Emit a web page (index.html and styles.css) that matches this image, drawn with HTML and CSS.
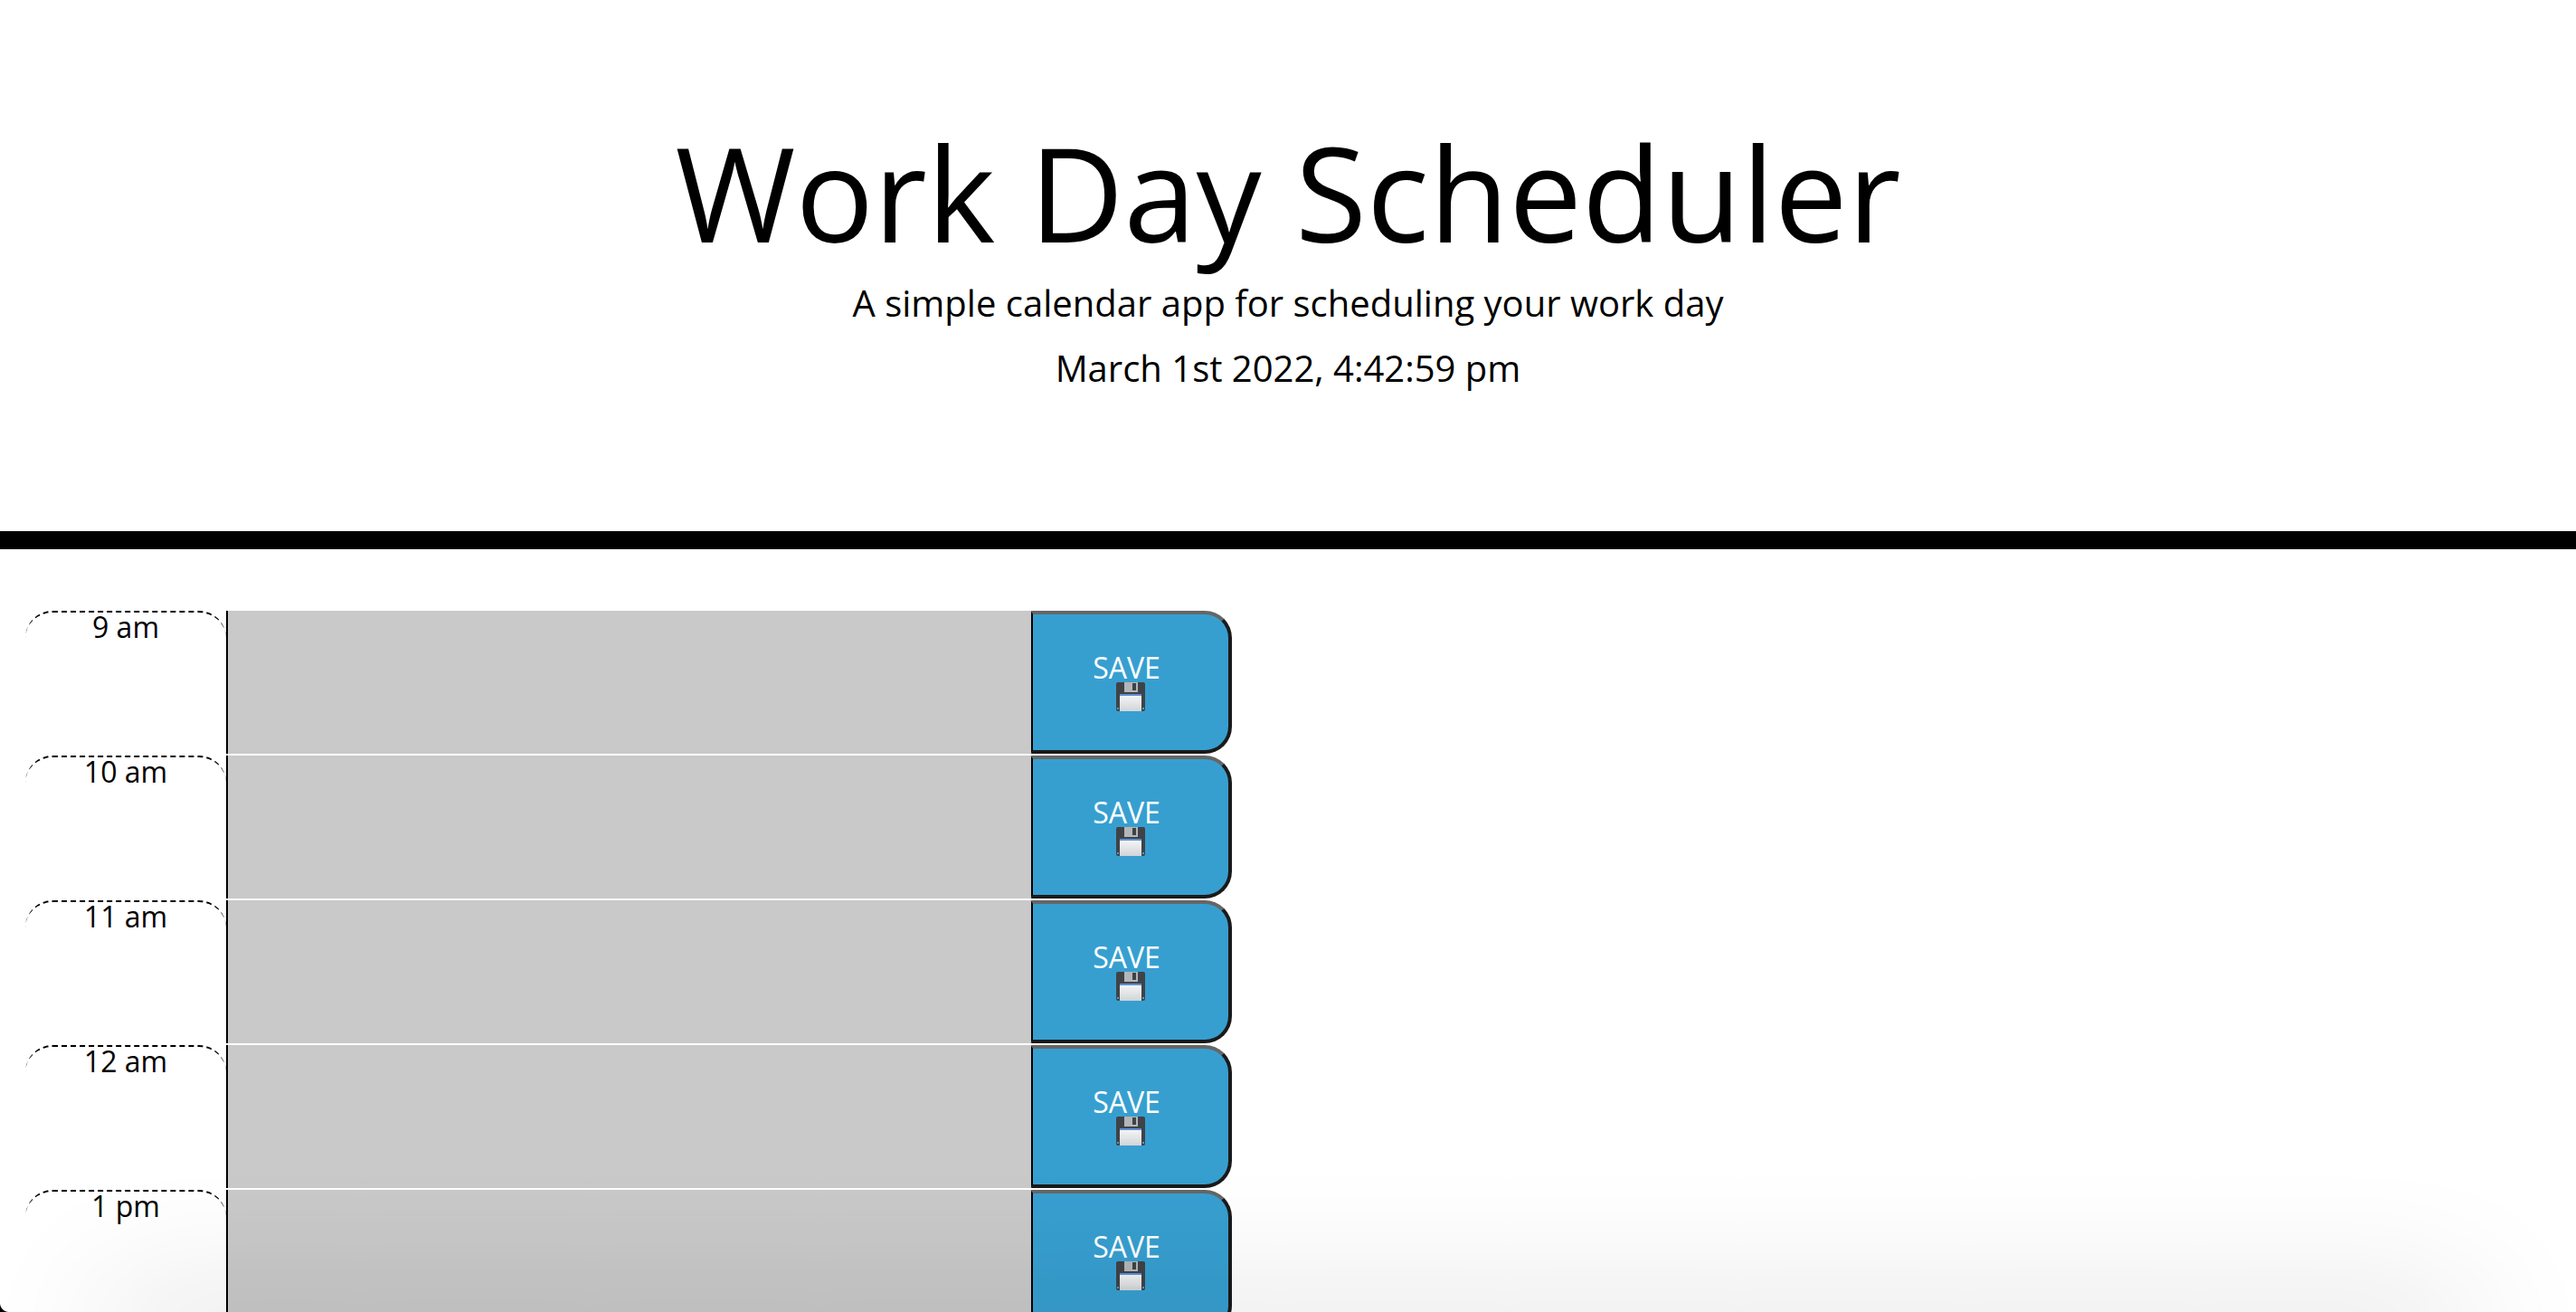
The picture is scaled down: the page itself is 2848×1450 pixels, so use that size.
FILE: index.html
```html
<!DOCTYPE html>
<html lang="en">

<head>
    <meta charset="UTF-8">
    <title>Work Day Scheduler</title>
    <link rel="stylesheet" href="styles.css">
</head>

<body>
    <svg class="defs" width="0" height="0">
        <defs>
            <linearGradient id="label" x1="0" y1="0" x2="0" y2="1">
                <stop offset="0" stop-color="#f7f8f9" />
                <stop offset="1" stop-color="#d2d4d6" />
            </linearGradient>
            <symbol id="disk" viewBox="0 0 32 32">
                <rect x="0" y="0" width="32" height="32" rx="2" fill="#3f4347" />
                <rect x="9" y="0" width="15" height="11" fill="#b4b6b8" />
                <rect x="18" y="1" width="4" height="8" fill="#3f4347" />
                <rect x="4" y="13" width="24" height="19" fill="url(#label)" />
                <rect x="4" y="13" width="24" height="2" fill="#5e8fd6" />
                <rect x="1" y="28" width="2" height="2" fill="#4a9cc0" />
                <rect x="29" y="28" width="2" height="2" fill="#4a9cc0" />
            </symbol>
        </defs>
    </svg>

    <header class="jumbotron">
        <h1>Work Day Scheduler</h1>
        <p class="lead">A simple calendar app for scheduling your work day</p>
        <p class="lead">March 1st 2022, 4:42:59 pm</p>
    </header>

    <div class="container">
        <div class="row">
            <div class="hour">9 am</div>
            <div class="description"></div>
            <button class="saveBtn">SAVE<svg class="disk"><use href="#disk" /></svg></button>
        </div>
        <div class="row">
            <div class="hour">10 am</div>
            <div class="description"></div>
            <button class="saveBtn">SAVE<svg class="disk"><use href="#disk" /></svg></button>
        </div>
        <div class="row">
            <div class="hour">11 am</div>
            <div class="description"></div>
            <button class="saveBtn">SAVE<svg class="disk"><use href="#disk" /></svg></button>
        </div>
        <div class="row">
            <div class="hour">12 am</div>
            <div class="description"></div>
            <button class="saveBtn">SAVE<svg class="disk"><use href="#disk" /></svg></button>
        </div>
        <div class="row">
            <div class="hour">1 pm</div>
            <div class="description"></div>
            <button class="saveBtn">SAVE<svg class="disk"><use href="#disk" /></svg></button>
        </div>
    </div>

    <div class="edge-shadow"></div>
    <div class="window-corner"></div>
</body>

</html>
```

FILE: styles.css
```css
html,
body {
    height: 100%;
    overflow: hidden;
}

body {
    margin: 0;
    font-family: "Open Sans", sans-serif;
    color: #000;
    background-color: #fff;
}

.defs {
    display: block;
    height: 0;
}

.jumbotron {
    height: 607px;
    padding-top: 126px;
    box-sizing: border-box;
    border-bottom: 20px solid #000;
    text-align: center;
}

.jumbotron h1 {
    margin: 0 0 8px;
    font-size: 144px;
    font-weight: 400;
    line-height: 1.2;
}

.lead {
    margin: 0 0 16px;
    font-size: 40px;
    line-height: 56px;
}

.container {
    padding: 68px 0 0 28px;
    width: 1334px;
}

.row {
    display: flex;
    height: 160px;
}

.hour {
    flex: none;
    width: 222px;
    height: 158px;
    box-sizing: border-box;
    border-top: 2px dashed #000;
    border-radius: 30px 30px 0 0;
    font-size: 32px;
    line-height: 32px;
    text-align: center;
}

.description {
    flex: none;
    width: 890px;
    height: 158px;
    box-sizing: border-box;
    border-left: 2px solid #000;
    background-color: #c9c9c9;
}

.saveBtn {
    flex: none;
    width: 222px;
    height: 158px;
    padding: 0 9px 0 0;
    box-sizing: border-box;
    border-style: solid;
    border-width: 4px 4px 4px 2px;
    border-color: #666 #1a1a1a #1a1a1a #000;
    border-radius: 0 30px 30px 0;
    background-color: #379fd0;
    color: #fff;
    font-family: "Open Sans", sans-serif;
    font-size: 32px;
    line-height: 34px;
    text-align: center;
}

.disk {
    display: block;
    width: 32px;
    height: 32px;
    margin: -1px auto 1px;
    transform: translateX(4px);
}

.edge-shadow {
    position: fixed;
    left: 115px;
    right: 115px;
    bottom: -40px;
    height: 40px;
    box-shadow: 0 0 150px 0 rgba(0, 0, 0, 0.24);
}

.window-corner {
    position: fixed;
    left: 0;
    bottom: 0;
    width: 10px;
    height: 10px;
    background: radial-gradient(circle at 100% 0, transparent 9.5px, #000 10.5px);
}
```
